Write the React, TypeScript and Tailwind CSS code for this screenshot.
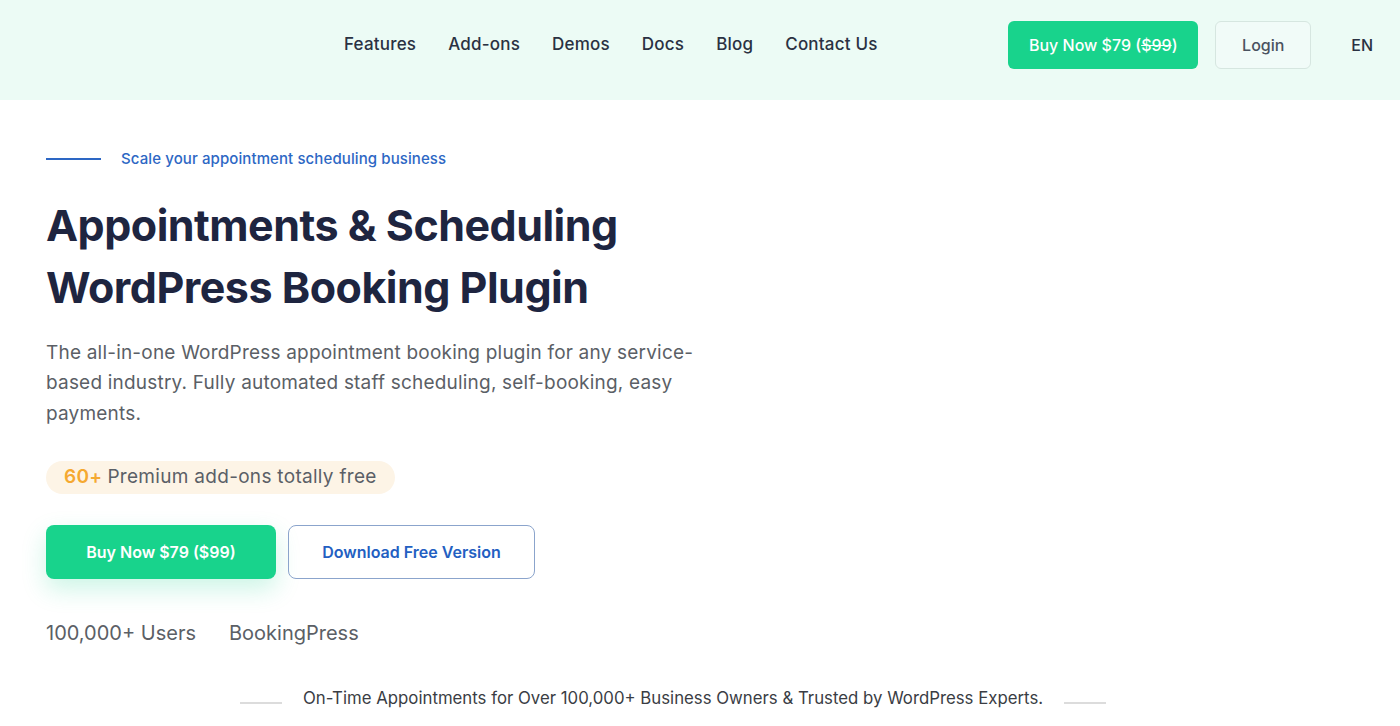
export default function App() {
  const nav = ["Features", "Add-ons", "Demos", "Docs", "Blog", "Contact Us"];
  return (
    <div className="min-h-screen bg-white font-['Inter',sans-serif] text-[#1e2540]">
      {/* header */}
      <header className="h-[100px] bg-[#ecfbf5] flex items-center pb-[10px]">
        <nav className="ml-[344px] flex items-center gap-[32px] text-[17px] font-medium text-[#2a3142]">
          {nav.map((n) => (
            <a key={n} href="#" className="tracking-[0.2px]">
              {n}
            </a>
          ))}
        </nav>
        <div className="ml-auto mr-[27px] flex items-center">
          <a
            href="#"
            className="flex h-[48px] w-[190px] items-center justify-center rounded-md bg-[#18d38c] text-[16px] font-medium text-white"
          >
            Buy Now $79 (<span className="line-through">$99</span>)
          </a>
          <a
            href="#"
            className="ml-[17px] flex h-[48px] w-[96px] items-center justify-center rounded-md border border-[#d6e6e0] bg-[#f1fbf8] text-[16px] font-medium text-[#4a5260]"
          >
            Login
          </a>
          <span className="ml-[40px] text-[16px] font-medium text-[#2a3142]">EN</span>
        </div>
      </header>

      {/* hero */}
      <section className="pl-[46px] pt-[48px]">
        <div className="flex items-center gap-[20px]">
          <span className="h-[2px] w-[55px] bg-[#2d67c4]" />
          <span className="text-[15px] font-medium tracking-[0.1px] text-[#2d67c4]">
            Scale your appointment scheduling business
          </span>
        </div>
        <h1 className="mt-[23px] text-[43px] font-bold leading-[62px] tracking-[-0.5px] text-[#1e2540]">
          Appointments &amp; Scheduling
          <br />
          WordPress Booking Plugin
        </h1>
        <p className="mt-[20px] w-[665px] text-[19px] leading-[30.5px] tracking-[0.2px] text-[#5b5f66]">
          The all-in-one WordPress appointment booking plugin for any service-based industry. Fully
          automated staff scheduling, self-booking, easy payments.
        </p>
        <div className="mt-[32px] inline-flex h-[33px] items-center rounded-full bg-[#fdf4e6] px-[18px] text-[19px] tracking-[0.3px] text-[#5b5f66]">
          <span className="mr-[5px] font-semibold text-[#f5a931]">60+</span>Premium add-ons totally free
        </div>
        <div className="mt-[31px] flex gap-[12px]">
          <a
            href="#"
            className="flex h-[54px] w-[230px] items-center justify-center rounded-lg bg-[#18d38c] text-[16px] font-semibold text-white shadow-[0_10px_24px_rgba(24,211,140,0.22)]"
          >
            Buy Now $79 ($99)
          </a>
          <a
            href="#"
            className="flex h-[54px] w-[247px] items-center justify-center rounded-lg border border-[#8ba4cc] text-[16px] font-semibold text-[#235fc2]"
          >
            Download Free Version
          </a>
        </div>
        <div className="mt-[39px] flex gap-[33px] text-[20px] text-[#5b5f66]">
          <span>100,000+ Users</span>
          <span>BookingPress</span>
        </div>
      </section>

      <div className="mt-[38px] flex items-center justify-center gap-[21px] pr-[54px]">
        <span className="mt-[8px] h-[2px] w-[42px] bg-[#dcdcdc]" />
        <span className="text-[16.8px] text-[#3a3d44]">
          On-Time Appointments for Over 100,000+ Business Owners &amp; Trusted by WordPress Experts.
        </span>
        <span className="mt-[8px] h-[2px] w-[42px] bg-[#dcdcdc]" />
      </div>
    </div>
  );
}
